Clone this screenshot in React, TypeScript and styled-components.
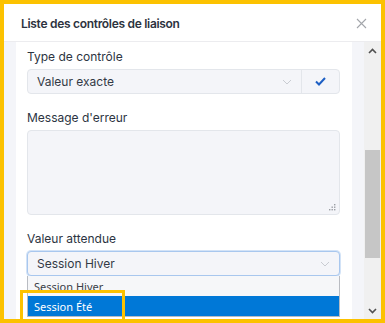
import styled, { createGlobalStyle } from "styled-components";

const Global = createGlobalStyle`
  html, body {
    margin: 0;
    padding: 0;
    background: #ffffff;
  }
  * {
    box-sizing: border-box;
  }
`;

const Frame = styled.div`
  position: relative;
  width: 385px;
  height: 323px;
  border: 4px solid #fcc200;
  display: flex;
  flex-direction: column;
  overflow: hidden;
  font-family: Inter, "Noto Sans", sans-serif;
  background: #ffffff;
`;

const Header = styled.div`
  height: 38px;
  flex-shrink: 0;
  display: flex;
  align-items: center;
  justify-content: space-between;
  padding: 2px 14px 0 17px;
  border-bottom: 1px solid #ececef;
`;

const Title = styled.h2`
  margin: 0;
  font-size: 12px;
  font-weight: 600;
  color: #2d3340;
  letter-spacing: -0.3px;
`;

const Close = styled.button`
  border: 0;
  background: none;
  padding: 0;
  width: 12px;
  height: 12px;
  display: flex;
  align-items: center;
  justify-content: center;
  cursor: pointer;
`;

const Body = styled.div`
  flex: 1;
  display: flex;
  min-height: 0;
`;

const ScrollArea = styled.div`
  flex: 1;
  background: #f4f5f9;
  padding: 0 12px;
  overflow: hidden;
`;

const Card = styled.div`
  background: #ffffff;
  height: 100%;
  padding: 7px 12px 0 11px;
  display: flex;
  flex-direction: column;
`;

const Field = styled.div<{ last?: boolean }>`
  display: flex;
  flex-direction: column;
  margin-bottom: ${(p) => (p.last ? "0" : "16px")};
`;

const Label = styled.label`
  font-size: 12px;
  line-height: 16px;
  color: #2c3442;
  margin-bottom: 4px;
`;

const Control = styled.div<{ focused?: boolean }>`
  height: 25px;
  display: flex;
  align-items: stretch;
  background: #f4f5f9;
  border: 1px solid ${(p) => (p.focused ? "#a8c7ee" : "#e3e6eb")};
  box-shadow: ${(p) => (p.focused ? "0 0 0 1px #d3e3f7" : "none")};
  border-radius: 4px;
`;

const Value = styled.div`
  flex: 1;
  display: flex;
  align-items: center;
  justify-content: space-between;
  padding: 0 9px;
  font-size: 12px;
  color: #333a45;
`;

const Addon = styled.div`
  width: 38px;
  display: flex;
  align-items: center;
  justify-content: center;
  border-left: 1px solid #e3e6eb;
`;

const TextArea = styled.div`
  position: relative;
  height: 85px;
  background: #f4f5f9;
  border: 1px solid #e3e6eb;
  border-radius: 4px;
`;

const Grip = styled.svg`
  position: absolute;
  right: 3px;
  bottom: 3px;
`;

const Dropdown = styled.div`
  border: 1px solid #b9bcc2;
  border-top: 0;
  background: #f6f7f9;
  display: flex;
  flex-direction: column;
  font-family: "Noto Sans", "Open Sans", sans-serif;
  font-size: 11px;
`;

const Option = styled.div<{ selected?: boolean }>`
  height: 20px;
  display: flex;
  align-items: center;
  padding-left: 6px;
  color: ${(p) => (p.selected ? "#ffffff" : "#3a3f48")};
  background: ${(p) => (p.selected ? "#0078d7" : "transparent")};
`;

const Scrollbar = styled.div`
  width: 17px;
  background: #f0f0f0;
  display: flex;
  flex-direction: column;
  align-items: stretch;
`;

const Arrow = styled.div`
  height: 17px;
  display: flex;
  align-items: center;
  justify-content: center;
`;

const Track = styled.div`
  flex: 1;
  display: flex;
  flex-direction: column;
  padding: 91px 1px 0 1px;
`;

const Thumb = styled.div`
  height: 108px;
  background: #c6c6c6;
`;

const Highlight = styled.div`
  position: absolute;
  left: 16px;
  top: 286px;
  width: 105px;
  height: 32px;
  border: 3px solid #fcc200;
  pointer-events: none;
`;

const Chevron = ({ color }: { color: string }) => (
  <svg width="10" height="6" viewBox="0 0 10 6">
    <path d="M1 1l4 4 4-4" fill="none" stroke={color} strokeWidth="1" />
  </svg>
);

export default function App() {
  return (
    <>
      <Global />
      <Frame>
        <Header>
          <Title>Liste des contrôles de liaison</Title>
          <Close aria-label="Fermer">
            <svg width="11" height="11" viewBox="0 0 11 11">
              <path d="M1 1l9 9M10 1l-9 9" stroke="#a3a6ab" strokeWidth="1.1" />
            </svg>
          </Close>
        </Header>
        <Body>
          <ScrollArea>
            <Card>
              <Field>
                <Label>Type de contrôle</Label>
                <Control>
                  <Value>
                    Valeur exacte
                    <Chevron color="#c9ccd2" />
                  </Value>
                  <Addon>
                    <svg width="11" height="9" viewBox="0 0 11 9">
                      <path d="M1 4.5l3 3 6-6.5" fill="none" stroke="#1d5fc4" strokeWidth="2" />
                    </svg>
                  </Addon>
                </Control>
              </Field>
              <Field>
                <Label>Message d'erreur</Label>
                <TextArea>
                  <Grip width="7" height="7" viewBox="0 0 7 7">
                    <rect x="5" y="0" width="1.4" height="1.4" fill="#9a9da3" />
                    <rect x="2.5" y="2.5" width="1.4" height="1.4" fill="#9a9da3" />
                    <rect x="5" y="2.5" width="1.4" height="1.4" fill="#9a9da3" />
                    <rect x="0" y="5" width="1.4" height="1.4" fill="#9a9da3" />
                    <rect x="2.5" y="5" width="1.4" height="1.4" fill="#9a9da3" />
                    <rect x="5" y="5" width="1.4" height="1.4" fill="#9a9da3" />
                  </Grip>
                </TextArea>
              </Field>
              <Field last>
                <Label>Valeur attendue</Label>
                <Control focused>
                  <Value>
                    Session Hiver
                    <Chevron color="#c9ccd2" />
                  </Value>
                </Control>
                <Dropdown>
                  <Option>Session Hiver</Option>
                  <Option selected>Session Été</Option>
                </Dropdown>
              </Field>
            </Card>
          </ScrollArea>
          <Scrollbar>
            <Arrow>
              <svg width="9" height="6" viewBox="0 0 9 6">
                <path d="M1 5l3.5-3.5L8 5" fill="none" stroke="#505050" strokeWidth="1.6" />
              </svg>
            </Arrow>
            <Track>
              <Thumb />
            </Track>
            <Arrow>
              <svg width="9" height="6" viewBox="0 0 9 6">
                <path d="M1 1l3.5 3.5L8 1" fill="none" stroke="#505050" strokeWidth="1.6" />
              </svg>
            </Arrow>
          </Scrollbar>
        </Body>
        <Highlight />
      </Frame>
    </>
  );
}
